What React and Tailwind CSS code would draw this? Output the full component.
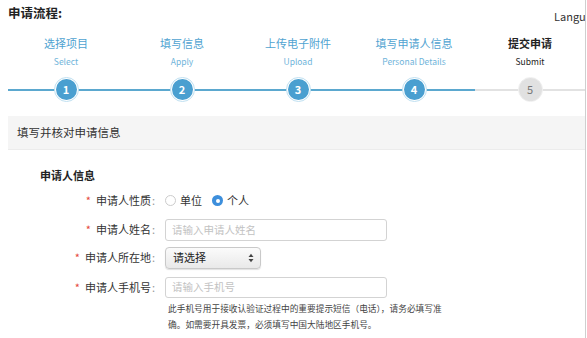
import React from 'react';

const steps = [
  { cn: '选择项目', en: 'Select', done: true },
  { cn: '填写信息', en: 'Apply', done: true },
  { cn: '上传电子附件', en: 'Upload', done: true },
  { cn: '填写申请人信息', en: 'Personal Details', done: true },
  { cn: '提交申请', en: 'Submit', done: false },
];

const Label = ({ children }) => (
  <div className="w-[165px] shrink-0 text-right pr-[10px] text-[11px] text-[#333]">
    <span className="text-[#e5483d] mr-[5px]">*</span>
    {children}
    <span className="text-[#999] ml-[1px]">:</span>
  </div>
);

export default function App() {
  return (
    <div
      className="w-[586px] h-[338px] bg-white border-r border-[#cfcfcf] overflow-hidden"
      style={{ fontFamily: '"Noto Sans CJK SC", "Noto Sans", sans-serif' }}
    >
      {/* top bar */}
      <div className="flex items-center justify-between h-[26px] pl-[8px]">
        <span className="text-[12.5px] font-bold text-[#222]">申请流程:</span>
        <span className="text-[11px] text-[#333] mt-[6px] whitespace-nowrap w-[31px] overflow-hidden">Langua</span>
      </div>

      {/* steps */}
      <div className="relative ml-[8px] mt-[8px]">
        <div className="absolute left-0 top-[55px] h-[2px] w-[467px] bg-[#5ba8cf]" />
        <div className="absolute left-[467px] top-[55px] h-[2px] w-[120px] bg-[#e2e2e2]" />
        <div className="relative grid grid-cols-[repeat(5,116px)]">
          {steps.map((s, i) => (
            <div key={i} className="flex flex-col items-center">
              <span className={`text-[11px] leading-[18px] ${s.done ? 'text-[#4fa3d1]' : 'text-[#222] font-bold'}`}>{s.cn}</span>
              <span className={`text-[8.5px] leading-[12px] mt-[3px] ${s.done ? 'text-[#6fb4da]' : 'text-[#222]'}`}>{s.en}</span>
              <div className="mt-[10px] flex items-center justify-center">
                {s.done ? (
                  <div className="w-[25px] h-[25px] rounded-full border border-[#bfe0f1] bg-white flex items-center justify-center">
                    <div className="w-[21px] h-[21px] rounded-full bg-[#4a9fd0] flex items-center justify-center text-white text-[11px] font-bold">
                      {i + 1}
                    </div>
                  </div>
                ) : (
                  <div className="w-[25px] h-[25px] rounded-full border border-[#eee] bg-white flex items-center justify-center">
                    <div className="w-[23px] h-[23px] rounded-full bg-[#e1e1e1] flex items-center justify-center text-[#777] text-[11px]">
                      {i + 1}
                    </div>
                  </div>
                )}
              </div>
            </div>
          ))}
        </div>
      </div>

      {/* section header */}
      <div className="ml-[8px] mt-[14px] h-[34px] bg-[#f5f5f5] border-b border-[#ececec] flex items-center pl-[9px] text-[11.5px] text-[#333]">
        填写并核对申请信息
      </div>

      {/* form */}
      <div className="pl-[40px] pt-[17px] text-[11px] font-bold text-[#222]">申请人信息</div>

      <div className="mt-[8px] flex items-center h-[18px]">
        <Label>申请人性质</Label>
        <div className="flex items-center text-[11px] text-[#333]">
          <span className="w-[11px] h-[11px] rounded-full border border-[#ccc] bg-white" />
          <span className="ml-[4px]">单位</span>
          <span className="ml-[10px] w-[11px] h-[11px] rounded-full bg-[#3d8fdc] flex items-center justify-center">
            <span className="w-[4px] h-[4px] rounded-full bg-white" />
          </span>
          <span className="ml-[4px]">个人</span>
        </div>
      </div>

      <div className="mt-[9px] flex items-center">
        <Label>申请人姓名</Label>
        <div className="w-[222px] h-[22px] border border-[#d3d3d3] rounded-[3px] flex items-center pl-[6px] text-[10.5px] text-[#c2c2c2]">
          请输入申请人姓名
        </div>
      </div>

      <div className="mt-[6px] flex items-center">
        <Label>申请人所在地</Label>
        <div className="w-[96px] h-[22px] border border-[#c9c9c9] rounded-[4px] bg-gradient-to-b from-[#fbfbfb] to-[#e9e9e9] shadow-[0_1px_1px_rgba(0,0,0,0.12)] flex items-center justify-between pl-[7px] pr-[6px] text-[11px] text-[#222]">
          <span>请选择</span>
          <svg width="6" height="10" viewBox="0 0 6 10">
            <path d="M0.5 4 L3 0.8 L5.5 4 Z" fill="#444" />
            <path d="M0.5 6 L3 9.2 L5.5 6 Z" fill="#444" />
          </svg>
        </div>
      </div>

      <div className="mt-[8px] flex items-center">
        <Label>申请人手机号</Label>
        <div className="w-[222px] h-[21px] border border-[#d3d3d3] rounded-[3px] flex items-center pl-[6px] text-[10.5px] text-[#c2c2c2]">
          请输入手机号
        </div>
      </div>

      <div className="ml-[168px] mt-[3px] flex flex-col text-[8.7px] leading-[16px] text-[#444] whitespace-nowrap">
        <span>此手机号用于接收认验证过程中的重要提示短信（电话），请务必填写准</span>
        <span>确。如需要开具发票，必须填写中国大陆地区手机号。</span>
      </div>
    </div>
  );
}
